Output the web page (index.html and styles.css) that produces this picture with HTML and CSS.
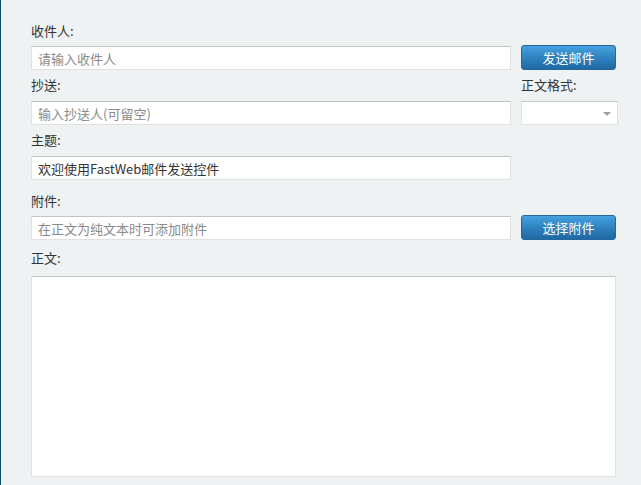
FILE: index.html
```html
<!DOCTYPE html>
<html lang="zh-CN">
<head>
<meta charset="utf-8">
<title>邮件发送</title>
<link rel="stylesheet" href="styles.css">
</head>
<body>
<div class="page">
  <div class="form">
    <div class="field">
      <label class="label">收件人:</label>
      <input class="input" type="text" placeholder="请输入收件人">
    </div>
    <div class="side side-end">
      <button class="btn" type="button">发送邮件</button>
    </div>

    <div class="field row2">
      <label class="label">抄送:</label>
      <input class="input" type="text" placeholder="输入抄送人(可留空)">
    </div>
    <div class="side row2">
      <label class="label">正文格式:</label>
      <div class="select"><span class="caret"></span></div>
    </div>

    <div class="field row3">
      <label class="label">主题:</label>
      <input class="input subject" type="text" value="欢迎使用FastWeb邮件发送控件">
    </div>

    <div class="field row4">
      <label class="label">附件:</label>
      <input class="input" type="text" placeholder="在正文为纯文本时可添加附件">
    </div>
    <div class="side side-end row4">
      <button class="btn" type="button">选择附件</button>
    </div>

    <div class="field row5 full">
      <label class="label">正文:</label>
      <textarea class="body-text"></textarea>
    </div>
  </div>
</div>
</body>
</html>
```

FILE: styles.css
```css
html, body {
  margin: 0;
  padding: 0;
  height: 100%;
}
body {
  background: #eef2f3;
  font-family: "Noto Sans CJK SC", "Noto Sans", sans-serif;
  font-size: 13px;
  color: #333;
}
.page {
  box-sizing: border-box;
  height: 485px;
  border-left: 1px solid #0e4a6b;
  padding: 22px 0 0 30px;
}
.form {
  display: grid;
  grid-template-columns: 480px 95px;
  column-gap: 10px;
  align-items: start;
}
.field {
  grid-column: 1;
  display: flex;
  flex-direction: column;
}
.full {
  grid-column: 1 / 3;
}
.side {
  grid-column: 2;
  display: flex;
  flex-direction: column;
}
.side-end {
  align-self: end;
}
.label {
  display: block;
  height: 18px;
  line-height: 18px;
  color: #333;
  margin-bottom: 6px;
}
.row2 { margin-top: 6px; }
.row2 .label { margin-bottom: 7px; }
.row3 { margin-top: 6px; }
.row3 .label { margin-bottom: 7px; }
.row4 { margin-top: 12px; }
.row5 { margin-top: 9px; }
.row5 .label { margin-bottom: 9px; }

.input {
  box-sizing: border-box;
  width: 480px;
  height: 24px;
  margin: 0;
  padding: 0 6px;
  border: 1px solid #e0e0e0;
  border-top-color: #c4c4c4;
  background: #fff;
  font-family: "Noto Sans CJK SC", "Noto Sans", sans-serif;
  font-size: 13px;
  color: #333;
  outline: none;
}
.input::placeholder {
  color: #8a8a8a;
}
.btn {
  box-sizing: border-box;
  width: 95px;
  height: 25px;
  margin: 0;
  padding: 0;
  border: 1px solid #24679e;
  border-radius: 3px;
  background: linear-gradient(to bottom, #46a2df 0%, #2f82c0 50%, #1f69a2 100%);
  color: #fff;
  font-family: "Noto Sans CJK SC", "Noto Sans", sans-serif;
  font-size: 13px;
  line-height: 23px;
  cursor: pointer;
}
.select {
  box-sizing: border-box;
  position: relative;
  width: 97px;
  height: 24px;
  border: 1px solid #e0e0e0;
  border-top-color: #c8c8c8;
  background: #fff;
}
.caret {
  position: absolute;
  right: 6px;
  top: 10px;
  width: 0;
  height: 0;
  border-left: 4px solid transparent;
  border-right: 4px solid transparent;
  border-top: 4px solid #a0a0a0;
}
.body-text {
  box-sizing: border-box;
  display: block;
  width: 585px;
  height: 201px;
  margin: 0;
  border: 1px solid #e0e0e0;
  border-top-color: #c4c4c4;
  background: #fff;
  resize: none;
  outline: none;
  font-family: "Noto Sans CJK SC", "Noto Sans", sans-serif;
  font-size: 13px;
}
```
